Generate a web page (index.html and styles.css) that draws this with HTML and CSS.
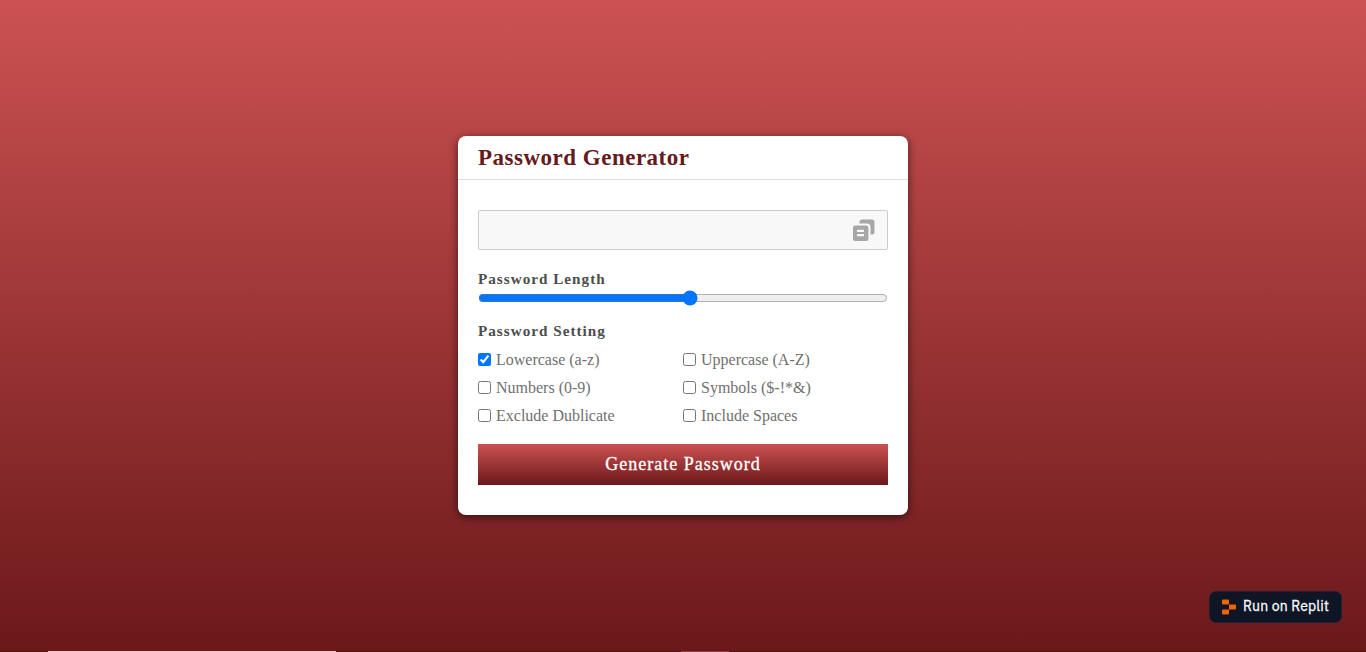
FILE: index.html
```html
<!DOCTYPE html>
<html lang="en">
<head>
<meta charset="utf-8">
<title>Password Generator</title>
<link rel="stylesheet" href="styles.css">
</head>
<body>
<main class="card">
  <h1 class="title">Password Generator</h1>
  <div class="content">
    <div class="output">
      <input class="output-field" type="text" disabled aria-label="Password">
      <svg class="copy" viewBox="0 0 24 24" aria-hidden="true">
        <path d="M10 1.500h10a2.500 2.500 0 0 1 2.500 2.500v10a2.500 2.500 0 0 1-2.500 2.500h-1.500V9a3.500 3.500 0 0 0-3.500-3.500H7.500V4a2.500 2.500 0 0 1 2.500-2.500z"/>
        <path fill-rule="evenodd" d="M3.200 7.500h11a2.200 2.200 0 0 1 2.200 2.200v11a2.200 2.200 0 0 1-2.200 2.200h-11a2.200 2.200 0 0 1-2.200-2.200v-11a2.200 2.200 0 0 1 2.200-2.200zM5 11.800v2.300h7v-2.300zM5 16v2.300h7v-2.300z"/>
      </svg>
    </div>
    <label class="heading" for="length">Password Length</label>
    <input class="slider" id="length" type="range" min="1" max="30" value="16">
    <h2 class="heading setting">Password Setting</h2>
    <div class="options">
      <label class="option"><input type="checkbox" checked><span>Lowercase (a-z)</span></label>
      <label class="option"><input type="checkbox"><span>Uppercase (A-Z)</span></label>
      <label class="option"><input type="checkbox"><span>Numbers (0-9)</span></label>
      <label class="option"><input type="checkbox"><span>Symbols ($-!*&amp;)</span></label>
      <label class="option"><input type="checkbox"><span>Exclude Dublicate</span></label>
      <label class="option"><input type="checkbox"><span>Include Spaces</span></label>
    </div>
    <button class="generate">Generate Password</button>
  </div>
</main>
<a class="badge">
  <svg class="badge-logo" viewBox="0 0 14 16" aria-hidden="true"><path d="M1 .5h5a1 1 0 0 1 1 1v4H1a1 1 0 0 1-1-1v-3a1 1 0 0 1 1-1zM7 5.500h6a1 1 0 0 1 1 1v3a1 1 0 0 1-1 1H7zM1 10.500h6v4a1 1 0 0 1-1 1H1a1 1 0 0 1-1-1v-3a1 1 0 0 1 1-1z"/></svg>
  <span>Run on Replit</span>
</a>
<div class="edge"><i class="edge-light"></i><i class="edge-faint"></i></div>
</body>
</html>
```
FILE: styles.css
```css
* {
  box-sizing: border-box;
  margin: 0;
  padding: 0;
}
body {
  height: 652px;
  overflow: hidden;
  display: flex;
  justify-content: center;
  align-items: flex-start;
  padding-top: 136px;
  font-family: "Liberation Serif", "Times New Roman", serif;
  background: linear-gradient(#cc5252, #6b181a);
}
.card {
  width: 450px;
  height: 379px;
  background: #fff;
  border-radius: 8px;
  box-shadow: 0 2px 8px rgba(0, 0, 0, 0.6);
}
.title {
  height: 44px;
  padding: 0 20px;
  border-bottom: 1px solid #ddd;
  font-size: 23px;
  line-height: 43px;
  letter-spacing: 0.5px;
  color: #651a1b;
}
.content {
  display: flex;
  flex-direction: column;
  padding: 30px 20px;
}
.output {
  position: relative;
  height: 40px;
  margin-bottom: 20px;
}
.output-field {
  display: block;
  width: 100%;
  height: 100%;
  border: 1px solid #ccc;
  border-radius: 2px;
  background: #f8f8f8;
}
.copy {
  position: absolute;
  top: 8px;
  right: 12px;
  width: 24px;
  height: 24px;
  fill: #a7a7a7;
}
.heading {
  font-size: 15.2px;
  font-weight: bold;
  line-height: 18px;
  letter-spacing: 1px;
  color: #4d4d4d;
}
.slider {
  width: 100%;
  height: 16px;
  margin: 2px 0 16px;
  accent-color: #0075ff;
}
.setting {
  margin-bottom: 10px;
}
.options {
  display: grid;
  grid-template-columns: 1fr 1fr;
  row-gap: 10px;
}
.option {
  display: flex;
  align-items: center;
  gap: 5px;
  height: 18px;
  font-size: 16px;
  line-height: 18px;
  color: #707070;
}
.option span {
  padding-top: 1px;
}
.option input {
  width: 13px;
  height: 13px;
}
.generate {
  height: 41px;
  margin-top: 20px;
  border: 0;
  font-family: inherit;
  font-size: 18px;
  letter-spacing: 1px;
  color: #fff;
  -webkit-text-stroke: 0.3px #fff;
  background: linear-gradient(#cc5252, #6b181a);
}
.badge {
  position: absolute;
  left: 1209px;
  top: 591px;
  width: 133px;
  height: 32px;
  display: flex;
  align-items: center;
  gap: 7px;
  padding-left: 12px;
  border: 1px solid #1c2333;
  border-radius: 7px;
  background: #0e1525;
  color: #f5f9fc;
  font: 400 14px/28px "IBM Plex Sans", "Noto Sans", sans-serif;
  letter-spacing: 0.15px;
  -webkit-text-stroke: 0.3px #f5f9fc;
  white-space: nowrap;
}
.badge span {
  padding-bottom: 2px;
}
.badge-logo {
  width: 14px;
  height: 16px;
  fill: #f26207;
}
.edge {
  position: absolute;
  left: 0;
  right: 0;
  bottom: 0;
  height: 1px;
  display: flex;
  padding-left: 48px;
  gap: 345px;
  background: #4d1518;
}
.edge-light {
  width: 288px;
  background: #fbc9ca;
}
.edge-faint {
  width: 48px;
  background: #87403f;
}
```
